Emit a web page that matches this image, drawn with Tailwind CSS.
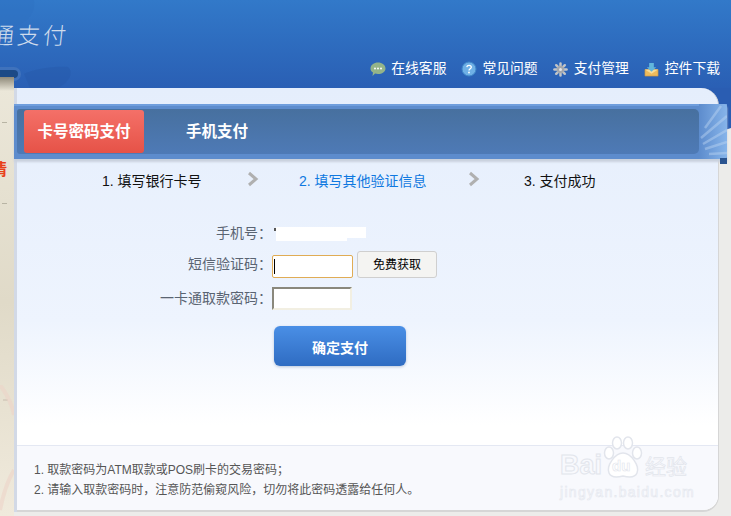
<!DOCTYPE html>
<html lang="zh-CN">
<head>
  <meta charset="UTF-8" />
  <title>一卡通支付</title>
  <script src="https://cdn.jsdelivr.net/npm/@tailwindcss/browser@4"></script>
</head>
<body class="bg-[#ececea] font-['Liberation_Sans','Noto_Sans_CJK_SC',sans-serif]">
<div class="relative w-[731px] h-[516px] overflow-hidden bg-[#ececea]">

  <!-- 顶部 -->
  <header class="relative h-[88px] bg-gradient-to-b from-[#3279c9] to-[#2a5fb4] overflow-hidden">
    <svg class="absolute left-0 top-0" width="120" height="88" viewBox="0 0 120 88" fill="none">
      <path d="M0 0H34C36 14 28 24 0 32Z" fill="#2f6fc0" opacity=".35"/>
      <path d="M24 74C36 68 56 66 68 67C74 72 70 82 58 88H30Z" fill="#2658a8" opacity=".4"/>
    </svg>
    <div class="absolute left-[-9px] top-[20px] text-[23px] leading-[32px] tracking-[3px] font-light text-[#cfdcec] -skew-x-6">通支付</div>
    <nav class="absolute right-[11px] top-[60px] flex items-center gap-[15px] text-[13.800px] leading-[18px] text-white">
      <a class="flex items-center gap-[5px]">
        <svg width="16" height="16" viewBox="0 0 16 16"><path d="M8 1.500C12 1.500 15.500 4 15.500 7.500S12 13 8 13C7 13 6 13 5 12.600L2.500 15 3 11.600C1.300 10.600.5 9.200.5 7.500.5 4 4 1.500 8 1.500Z" fill="#94b489"/><circle cx="5" cy="7.500" r="1" fill="#fff"/><circle cx="8" cy="7.500" r="1" fill="#fff"/><circle cx="11" cy="7.500" r="1" fill="#fff"/></svg>
        在线客服
      </a>
      <a class="flex items-center gap-[5px]">
        <svg width="16" height="16" viewBox="0 0 16 16"><circle cx="8" cy="8" r="7" fill="#6fb0e6" stroke="#3f86c8"/><path d="M5.800 6.200C6 4.800 7 4.300 8 4.300C9.400 4.300 10.300 5.100 10.300 6.200C10.300 7.700 8 7.800 8 9.500" fill="none" stroke="#fff" stroke-width="1.300"/><circle cx="8" cy="11.500" r=".9" fill="#fff"/></svg>
        常见问题
      </a>
      <a class="flex items-center gap-[6px]">
        <svg width="15" height="15" viewBox="0 0 16 16"><g stroke="#c3c6c9" stroke-width="2.600" stroke-linecap="round"><path d="M8 1.500V14.500"/><path d="M1.500 8H14.500"/><path d="M3.400 3.400L12.600 12.600"/><path d="M12.600 3.400L3.400 12.600"/></g><circle cx="8" cy="8" r="4" fill="#a4a8ad"/><circle cx="8" cy="8" r="1.600" fill="#e4e6e8"/></svg>
        支付管理
      </a>
      <a class="flex items-center gap-[6px]">
        <svg width="15" height="15" viewBox="0 0 16 16"><path d="M1 8H15V15H1Z" fill="#edbb5d" stroke="#c9923c" stroke-width=".6"/><path d="M1 8L8 12.500L15 8" fill="#f8dc97"/><path d="M5.500 1H10.500V5.500H13L8 10.500L3 5.500H5.500Z" fill="#62b6dc"/></svg>
        控件下载
      </a>
    </nav>
  </header>

  <!-- 右上角蓝色延伸 -->
  <svg class="absolute right-0 top-[88px]" width="50" height="44" viewBox="0 0 50 44"><path d="M0 0H50V40L38 44H0Z" fill="#2a5db2"/></svg>

  <div class="relative flex h-[428px]">
    <!-- 左侧窄条 -->
    <aside class="w-[14px] shrink-0 bg-gradient-to-b from-[#ebe7d9] via-[#e0dac8] to-[#f0eadc]"></aside>

    <!-- 主卡片 -->
    <main class="relative ml-[3px] w-[702px] h-[424px] flex flex-col rounded-tr-[18px] rounded-br-[16px] bg-gradient-to-b from-[#e5eefc] via-[#eef4fe] via-55% to-white to-80% border-b-2 border-r border-[#d6d6d6] shadow-[-3px_0_0_#d2d9e6]">
      <div class="h-[16px] shrink-0"></div>

      <!-- 选项卡 -->
      <div class="relative -ml-[3px] w-[713px] h-[55px] shrink-0 bg-[#5d8ccd] border-t-2 border-[#6f9edd] shadow-[0_3px_2px_#c9d1dd] pl-[3px] pt-[3px]">
        <div class="w-[682px] h-[45px] rounded-r-[5px] rounded-l-[3px] bg-gradient-to-b from-[#47709f] to-[#4e7ab6] flex items-center pl-[7px]">
          <button class="w-[120px] h-[43px] rounded-[3px] bg-gradient-to-b from-[#f47068] to-[#e65247] text-white text-[15.500px] font-bold">卡号密码支付</button>
          <button class="ml-[42px] text-white text-[15.500px] font-bold">手机支付</button>
        </div>
        <svg class="absolute right-0 -top-[2px] rounded-r-[3px]" width="28" height="55" viewBox="0 0 28 55" fill="none">
          <defs><linearGradient id="ribbon" x1="0" x2="1" y1="0" y2="0"><stop offset="0" stop-color="#5d8ccd"/><stop offset="1" stop-color="#86b4ea"/></linearGradient></defs>
          <rect width="28" height="55" fill="url(#ribbon)"/>
          <path d="M2 34L28 12M4 40L28 26M6 45L28 38M10 50L28 49M6 24L22 2" stroke="#bcd4f2" stroke-width="2.500" opacity=".45"/>
        </svg>
        <div class="absolute right-0 top-[52px] w-[7px] h-[6px] bg-[#2a5490]"></div>
      </div>

      <!-- 步骤 -->
      <ol class="relative h-[40px] shrink-0 mt-[2px] text-[14px] leading-[20px] text-[#111]">
        <li class="absolute left-[85px] top-[10px]">1. 填写银行卡号</li>
        <li class="absolute left-[282px] top-[10px] text-[#0f78e0]">2. 填写其他验证信息</li>
        <li class="absolute left-[507px] top-[10px]">3. 支付成功</li>
        <svg class="absolute left-[230px] top-[10px]" width="12" height="16" viewBox="0 0 12 16" fill="none"><path d="M2 2L9 8L2 14" stroke="#b0b0b0" stroke-width="3"/></svg>
        <svg class="absolute left-[451px] top-[10px]" width="12" height="16" viewBox="0 0 12 16" fill="none"><path d="M2 2L9 8L2 14" stroke="#b0b0b0" stroke-width="3"/></svg>
      </ol>

      <!-- 表单 -->
      <form class="flex-1 flex flex-col pt-[20px] text-[14px] text-[#5a6472]">
        <div class="flex items-center h-[24px]">
          <label class="w-[255px] text-right">手机号：</label>
          <span class="relative ml-[4px] w-[90px] h-[11px] -mt-[2px] bg-white">
            <span class="absolute left-0 top-[10px] w-[71px] h-[4px] bg-white"></span>
          </span>
        </div>
        <div class="flex items-center h-[27px] mt-[6px]">
          <label class="w-[255px] text-right">短信验证码：</label>
          <div class="mt-[3px] w-[81px] h-[23px] bg-white border border-[#e0ac55] rounded-[2px] flex items-center pl-[1px]"><span class="w-px h-[15px] bg-black"></span></div>
          <button type="button" class="ml-[4px] w-[80px] h-[27px] rounded-[3px] bg-[#f4f4f2] border border-[#cfcfcf] text-[12px] font-normal text-black">免费获取</button>
        </div>
        <div class="flex items-center h-[24px] mt-[8px]">
          <label class="w-[255px] text-right">一卡通取款密码：</label>
          <div class="w-[80px] h-[23px] bg-white border-2 border-t-[#8a887c] border-l-[#8a887c] border-r-[#f2efe2] border-b-[#f2efe2]"></div>
        </div>
        <button type="button" class="ml-[257px] mt-[16px] w-[132px] h-[40px] pt-[4px] rounded-[6px] bg-gradient-to-b from-[#4a8fe6] to-[#2f6cc2] shadow-[0_1px_3px_#b9c6da] text-white text-[14px] font-bold">确定支付</button>
      </form>

      <!-- 说明 -->
      <div class="h-[65px] shrink-0 border-t border-[#e4e8f3] bg-[#f8f9fd] rounded-br-[15px] pl-[17px] pt-[14px] text-[12px] leading-[20px] text-[#555]">
        <p>1. 取款密码为ATM取款或POS刷卡的交易密码；</p>
        <p>2. 请输入取款密码时，注意防范偷窥风险，切勿将此密码透露给任何人。</p>
      </div>
    </main>
  </div>

  <!-- 左侧窄条顶部 -->
  <div class="absolute left-0 top-[67px] w-[21px] h-[14px] rounded-r-[7px] bg-[#1c4a86] border-[3px] border-l-0 border-[#3f72bc]"></div>
  <div class="absolute left-0 top-[77px] w-[14px] h-[14px] bg-gradient-to-b from-[#8f8a7a] to-[#ebe7d9]"></div>
  <div class="absolute left-0 top-0 w-[14px] h-[516px] overflow-hidden pointer-events-none">
    <span class="absolute left-[-9px] top-[159px] text-[16px] leading-[22px] font-bold text-[#e8401a]">情</span>
    <span class="absolute left-[2px] top-[122px] w-[5px] h-px bg-[#b8b4a4]"></span>
    <span class="absolute left-[2px] top-[203px] w-[5px] h-px bg-[#b8b4a4]"></span>
    <span class="absolute left-[3px] top-[399px] w-[5px] h-[2px] bg-[#d8cfc0]"></span>
    <svg class="absolute left-0 top-[385px]" width="14" height="131" viewBox="0 0 14 131" fill="none"><path d="M0 0C6 8 12 18 14 30M14 85C8 95 3 110 0 125" stroke="#ecd3c8" stroke-width="4" opacity=".6"/></svg>
  </div>
  <span class="absolute left-[274px] top-[228px] w-[2px] h-[3px] bg-[#555]"></span>

  <!-- 水印 -->
  <div class="absolute left-[560px] top-[436px] w-[132px] h-[64px] whitespace-nowrap pointer-events-none text-transparent">
    <div class="flex items-start h-[44px]">
      <span class="mt-[15px] text-[27px] leading-[28px] font-bold [-webkit-text-stroke:1px_#e2e5ec]">Bai</span>
      <span class="relative ml-[1px] w-[40px] h-[44px] shrink-0">
        <svg class="absolute left-0 top-0" width="40" height="44" viewBox="0 0 40 44" fill="#fff" stroke="#e2e5ec" stroke-width="1.500"><ellipse cx="6" cy="17" rx="4.500" ry="6"/><ellipse cx="14" cy="7" rx="4.500" ry="6"/><ellipse cx="25" cy="7" rx="4.500" ry="6"/><ellipse cx="34" cy="17" rx="4.500" ry="6"/><path d="M20 17C28 17 37 30 34 37C32 42 24 41 20 40C16 41 8 42 6 37C3 30 12 17 20 17Z"/></svg>
        <span class="absolute left-[9px] top-[21px] text-[15px] leading-[18px] font-bold [-webkit-text-stroke:.6px_#e2e5ec]">du</span>
      </span>
      <span class="mt-[19px] ml-[2px] text-[21px] leading-[24px] [-webkit-text-stroke:.7px_#e2e5ec]">经验</span>
    </div>
    <div class="mt-[3px] text-[14px] leading-[18px] tracking-[1.300px] [-webkit-text-stroke:.6px_#e4e7ee]">jingyan.baidu.com</div>
  </div>
</div>
</body>
</html>
